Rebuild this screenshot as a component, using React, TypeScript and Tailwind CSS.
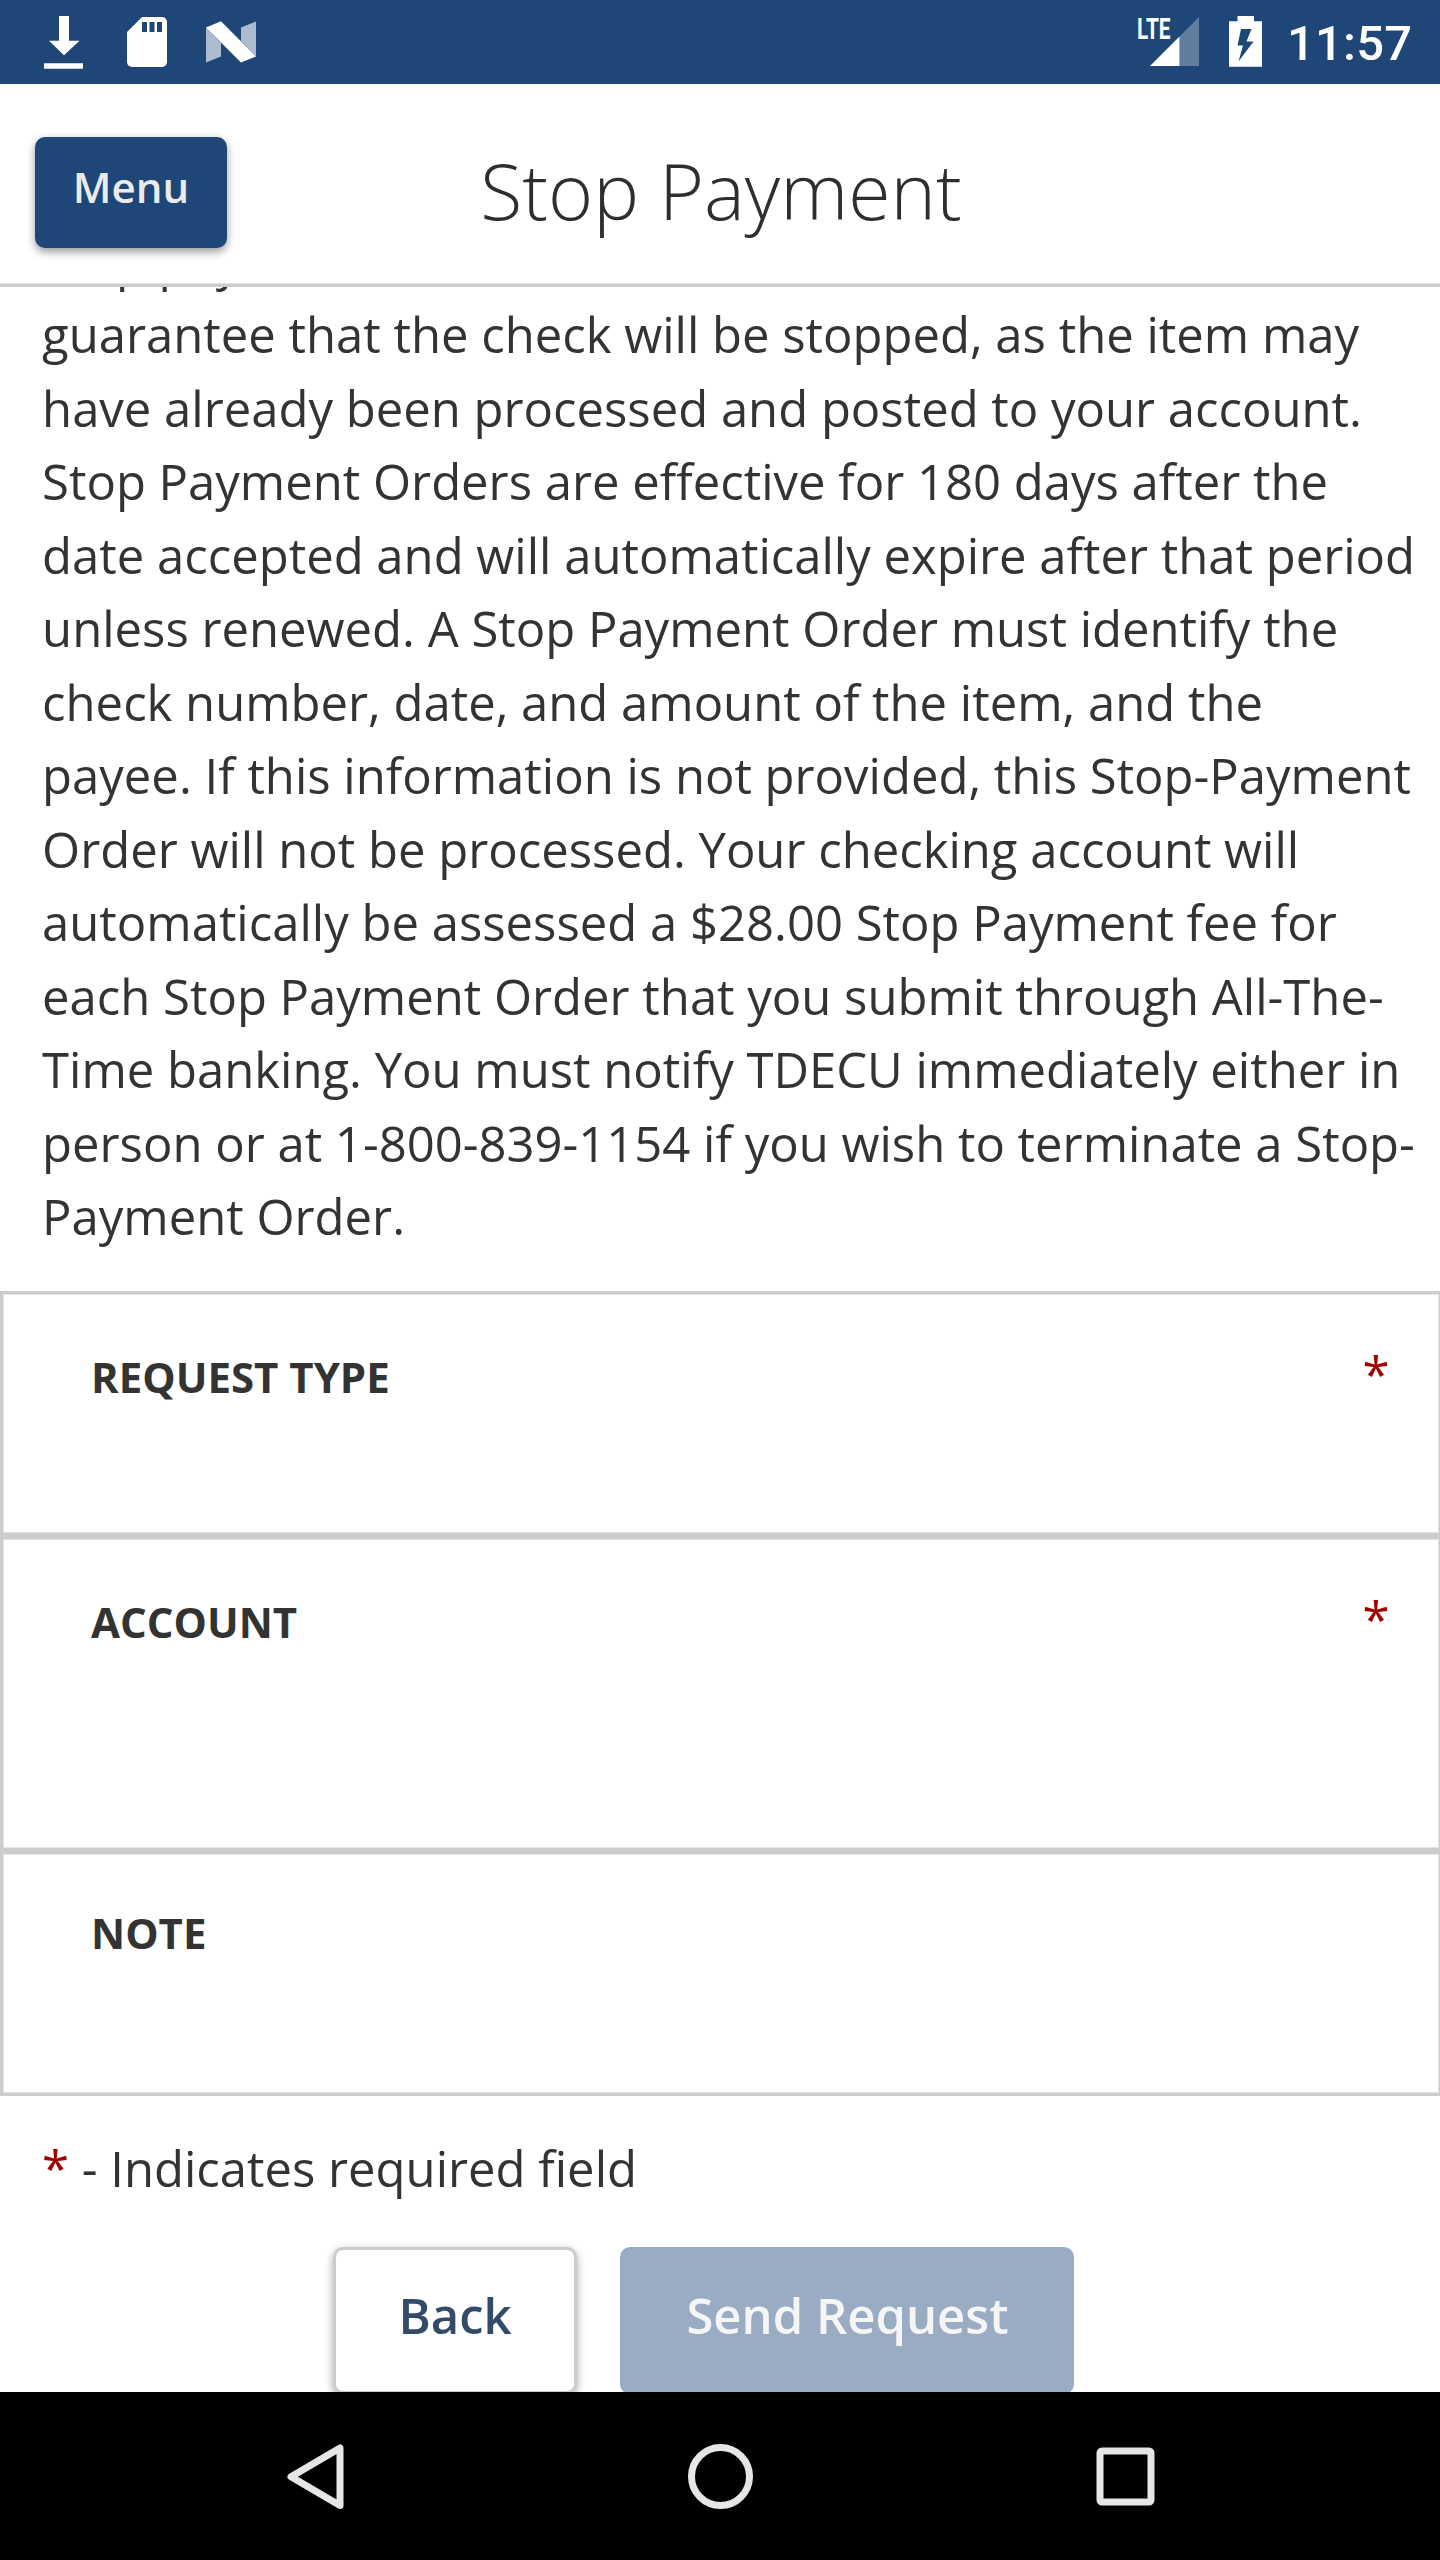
import React from "react";

const termsLines = [
  "Stop payment does not",
  "guarantee that the check will be stopped, as the item may",
  "have already been processed and posted to your account.",
  "Stop Payment Orders are effective for 180 days after the",
  "date accepted and will automatically expire after that period",
  "unless renewed. A Stop Payment Order must identify the",
  "check number, date, and amount of the item, and the",
  "payee. If this information is not provided, this Stop-Payment",
  "Order will not be processed. Your checking account will",
  "automatically be assessed a $28.00 Stop Payment fee for",
  "each Stop Payment Order that you submit through All-The-",
  "Time banking. You must notify TDECU immediately either in",
  "person or at 1-800-839-1154 if you wish to terminate a Stop-",
  "Payment Order.",
];

function StatusBar() {
  return (
    <div className="flex h-[84px] shrink-0 items-start bg-[#1e4778] text-white">
      <svg className="ml-[40px] h-[84px] w-[48px]" viewBox="40 0 48 84" fill="#fff">
        <path d="M59 16h10v24.700h10.500L64 55.200 49 40.700h10z" />
        <path d="M44 63.200h39v5.500H44z" />
      </svg>
      <svg className="ml-[38px] h-[84px] w-[42px]" viewBox="126 0 42 84" fill="#fff" fillRule="evenodd">
        <path d="M142 17h20a5 5 0 0 1 5 5v40a5 5 0 0 1-5 5h-30a5 5 0 0 1-5-5V32zM142 22v10h5V22zM149.500 22v10h5V22zM157 22v10h5V22z" />
      </svg>
      <svg className="ml-[37px] h-[84px] w-[52px]" viewBox="205 0 52 84" fill="#fff">
        <path d="M206 27.500V62.500L221 56.500V43zM241 27.500L256 21.500V56.500L241 41z" opacity="0.63" />
        <path d="M206 27.500L221 21.300 256 56.500 241 62.600z" />
      </svg>
      <div className="flex-1" />
      <svg className="h-[84px] w-[64px]" viewBox="1137 0 64 84" fill="#fff">
        <path d="M1179.500 36.500L1199 17v49h-19.500z" opacity="0.3" />
        <path d="M1150 66l29.500-29.500V66z" />
        <text x="1137" y="39" fontFamily="Roboto" fontWeight="700" fontSize="29.500" textLength="33.500" lengthAdjust="spacingAndGlyphs">
          LTE
        </text>
      </svg>
      <svg className="ml-[27px] h-[84px] w-[36px]" viewBox="1228 0 36 84" fill="#fff" fillRule="evenodd">
        <path d="M1237.500 16h16.500v5.300h8v45.400h-33V21.300h8.500zM1241 29L1237.500 45.500H1243L1238.500 61.500 1253.500 41.500H1246.500L1251.500 29z" />
      </svg>
      <span className="ml-[23px] mr-[25px] w-[128px] whitespace-nowrap font-['Roboto'] text-[49px] font-medium leading-[88px] tracking-[0.2px]">
        11:57
      </span>
    </div>
  );
}

function Header() {
  return (
    <header className="grid h-[203px] shrink-0 grid-cols-[1fr_auto_1fr] items-start border-b-3 border-[#ccc] pl-[35px] pr-[33px] shadow-[inset_0_-1px_0_#e5e5e5]">
      <button className="mt-[52.5px] flex h-[111.5px] w-[192px] justify-center rounded-[10px] bg-[#1e4778] pt-[21.5px] text-[42px] font-semibold leading-[57px] text-[#ebebeb] shadow-[0_3.5px_8px_rgba(0,0,0,0.4)]">
        Menu
      </button>
      <h1 className="mt-[54px] text-[77px] font-light leading-[105px] text-[#2e2e2e]">Stop Payment</h1>
    </header>
  );
}

function Field({ label, required, className }: { label: string; required?: boolean; className: string }) {
  return (
    <div
      className={
        "flex items-start justify-between border-3 border-[#ccc] pl-[88px] pr-[49.5px] shadow-[inset_0_0_0_1px_#e5e5e5] " +
        className
      }
    >
      <span className="text-[42px] font-bold leading-[63px]">{label}</span>
      {required && <span className="-mt-[2px] text-[49px] leading-[63px] text-[#a00000]">*</span>}
    </div>
  );
}

function NavBar() {
  return (
    <nav className="flex h-[168px] shrink-0 items-center justify-center gap-[321px] bg-black">
      <svg className="h-[84px] w-[84px]" viewBox="0 0 84 84" fill="none" stroke="#e6e6e6" strokeWidth="7" strokeLinejoin="round">
        <path d="M67 14v57.500L18 42.800z" />
      </svg>
      <svg className="h-[84px] w-[84px]" viewBox="0 0 84 84" fill="none" stroke="#e6e6e6" strokeWidth="7">
        <circle cx="42.500" cy="42.500" r="29" />
      </svg>
      <svg className="h-[84px] w-[84px]" viewBox="0 0 84 84" fill="none" stroke="#e6e6e6" strokeWidth="7">
        <rect x="17" y="17" width="51" height="51" rx="2" />
      </svg>
    </nav>
  );
}

export default function App() {
  return (
    <div className="flex h-[2560px] w-[1440px] flex-col overflow-hidden bg-white font-['Open_Sans',sans-serif] text-[#333]">
      <StatusBar />
      <Header />
      <main className="flex min-h-0 flex-1 flex-col overflow-hidden">
        <p className="-mt-[62.5px] shrink-0 whitespace-pre pl-[42.1px] text-[49px] leading-[73.5px]">
          {termsLines.join("\n")}
        </p>
        <div className="-mr-[2px] mt-[37.5px] flex shrink-0 flex-col">
          <Field label="REQUEST TYPE" required className="h-[245px] pt-[51px]" />
          <Field label="ACCOUNT" required className="h-[315px] pt-[51px]" />
          <Field label="NOTE" className="h-[245px] pt-[47px]" />
        </div>
        <p className="mt-[36px] shrink-0 pl-[42px] text-[49px] leading-[73.5px]">
          <span className="text-[#a00000]">*</span> - Indicates required field
        </p>
        <div className="mt-[41px] flex shrink-0 gap-[43px] pl-[333px] text-[49px] font-semibold leading-[67px]">
          <button className="flex h-[147px] w-[244px] justify-center rounded-[10px] border-3 border-[#ccc] bg-white pt-[32px] text-[#334b68] shadow-[0_3px_8px_rgba(0,0,0,0.35)]">
            Back
          </button>
          <button className="flex h-[147px] w-[454px] justify-center rounded-[10px] bg-[#9aabc4] pl-px pt-[35px] text-[#f5f5f5]">
            Send Request
          </button>
        </div>
      </main>
      <NavBar />
    </div>
  );
}
